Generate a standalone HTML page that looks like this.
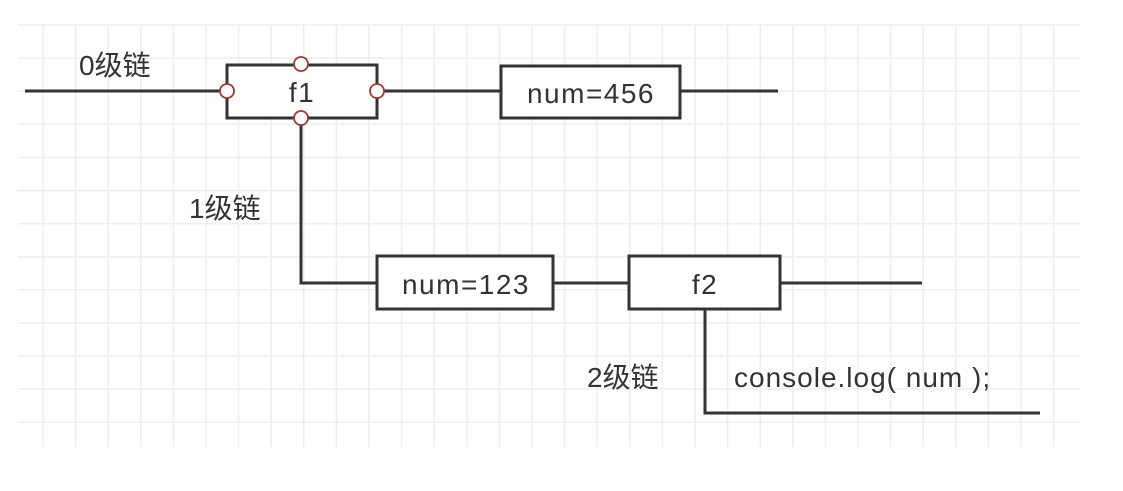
<!DOCTYPE html>
<html><head><meta charset="utf-8"><style>
html,body{margin:0;padding:0;background:#fff;width:1123px;height:491px;overflow:hidden}
text{font-family:"Liberation Sans","Noto Sans CJK SC",sans-serif;fill:#333}
</style></head><body>
<svg width="1123" height="491" xmlns="http://www.w3.org/2000/svg">
<g stroke="#eeeeee" stroke-width="1.5">
<line x1="43" y1="25" x2="43" y2="447"/><line x1="75.6" y1="25" x2="75.6" y2="447"/><line x1="108.2" y1="25" x2="108.2" y2="447"/><line x1="140.8" y1="25" x2="140.8" y2="447"/><line x1="173.4" y1="25" x2="173.4" y2="447"/><line x1="206" y1="25" x2="206" y2="447"/><line x1="238.6" y1="25" x2="238.6" y2="447"/><line x1="271.2" y1="25" x2="271.2" y2="447"/><line x1="303.8" y1="25" x2="303.8" y2="447"/><line x1="336.4" y1="25" x2="336.4" y2="447"/><line x1="369" y1="25" x2="369" y2="447"/><line x1="401.6" y1="25" x2="401.6" y2="447"/><line x1="434.2" y1="25" x2="434.2" y2="447"/><line x1="466.8" y1="25" x2="466.8" y2="447"/><line x1="499.4" y1="25" x2="499.4" y2="447"/><line x1="532" y1="25" x2="532" y2="447"/><line x1="564.6" y1="25" x2="564.6" y2="447"/><line x1="597.2" y1="25" x2="597.2" y2="447"/><line x1="629.8" y1="25" x2="629.8" y2="447"/><line x1="662.4" y1="25" x2="662.4" y2="447"/><line x1="695" y1="25" x2="695" y2="447"/><line x1="727.6" y1="25" x2="727.6" y2="447"/><line x1="760.2" y1="25" x2="760.2" y2="447"/><line x1="792.8" y1="25" x2="792.8" y2="447"/><line x1="825.4" y1="25" x2="825.4" y2="447"/><line x1="858" y1="25" x2="858" y2="447"/><line x1="890.6" y1="25" x2="890.6" y2="447"/><line x1="923.2" y1="25" x2="923.2" y2="447"/><line x1="955.8" y1="25" x2="955.8" y2="447"/><line x1="988.4" y1="25" x2="988.4" y2="447"/><line x1="1021" y1="25" x2="1021" y2="447"/><line x1="1053.6" y1="25" x2="1053.6" y2="447"/>
<line x1="18" y1="25" x2="1080" y2="25"/><line x1="18" y1="58.1" x2="1080" y2="58.1"/><line x1="18" y1="91.2" x2="1080" y2="91.2"/><line x1="18" y1="124.3" x2="1080" y2="124.3"/><line x1="18" y1="157.4" x2="1080" y2="157.4"/><line x1="18" y1="190.5" x2="1080" y2="190.5"/><line x1="18" y1="223.6" x2="1080" y2="223.6"/><line x1="18" y1="256.7" x2="1080" y2="256.7"/><line x1="18" y1="289.8" x2="1080" y2="289.8"/><line x1="18" y1="322.9" x2="1080" y2="322.9"/><line x1="18" y1="356" x2="1080" y2="356"/><line x1="18" y1="389.1" x2="1080" y2="389.1"/><line x1="18" y1="422.2" x2="1080" y2="422.2"/>
</g>
<g stroke="#333" stroke-width="3" fill="#fff">
<line x1="25" y1="91" x2="227" y2="91"/>
<line x1="377" y1="91" x2="500" y2="91"/>
<line x1="680" y1="91" x2="778" y2="91"/>
<polyline points="301,118 301,283 377,283" fill="none"/>
<line x1="553" y1="283" x2="629" y2="283"/>
<line x1="780" y1="283" x2="922" y2="283"/>
<polyline points="705,310 705,413 1040,413" fill="none"/>
<rect x="227" y="65" width="150" height="53"/>
<rect x="501" y="66" width="179" height="52"/>
<rect x="377" y="256" width="176" height="53"/>
<rect x="629" y="256" width="151" height="53"/>
</g>
<g stroke="#a8362c" stroke-width="1.8" fill="#fff">
<circle cx="301" cy="64" r="7"/><circle cx="227" cy="91" r="7"/><circle cx="377" cy="91" r="7"/><circle cx="301" cy="118" r="7"/>
</g>
<g font-size="28">
<text x="79" y="75">0级链</text>
<text x="189" y="218">1级链</text>
<text x="587" y="387">2级链</text>
</g>
<g font-size="28" letter-spacing="1.5">
<text x="302" y="102" text-anchor="middle">f1</text>
<text x="591" y="103" text-anchor="middle">num=456</text>
<text x="466" y="294" text-anchor="middle">num=123</text>
<text x="705" y="294" text-anchor="middle">f2</text>
<text x="734" y="387" letter-spacing="1">console.log( num );</text>
</g>
</svg>
</body></html>
